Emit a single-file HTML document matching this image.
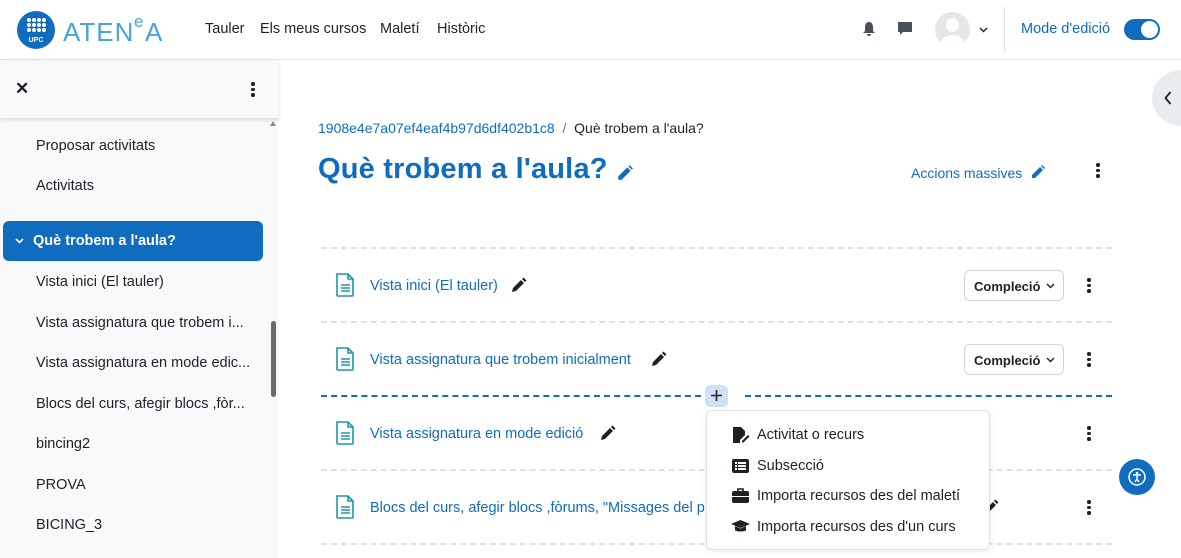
<!DOCTYPE html>
<html><head><meta charset="utf-8"><style>
*{box-sizing:border-box;margin:0;padding:0}
body{width:1181px;height:558px;overflow:hidden;font-family:"Liberation Sans",sans-serif;background:#fff;position:relative;color:#1d2125;font-size:14.5px}
.abs{position:absolute}
.hdr{position:absolute;left:0;top:0;width:1181px;height:60px;border-bottom:1px solid #dee2e6;background:#fff}
.nav{position:absolute;top:21px;font-size:14.5px;color:#1d2125}
.side{position:absolute;left:0;top:60px;width:279px;height:498px;background:#f8f9fa}
.sh{position:absolute;left:0;top:0;width:279px;height:58px;background:#f8f9fa;box-shadow:0 2px 4px rgba(0,0,0,.12)}
.si{position:absolute;left:36px;font-size:14.5px;color:#1d2125;white-space:nowrap}
.dash{position:absolute;left:321px;width:791px;border-top:2px dashed #dee2e6}
.act{position:absolute;left:370px;color:#0f6cbf;font-size:14.5px;white-space:nowrap}
.comp{position:absolute;left:964px;width:100px;height:31px;border:1px solid #ced4da;border-radius:6px;font-weight:bold;font-size:13px;padding:8px 0 0 9px;background:#fff}
.comp svg{position:absolute;right:8px;top:12px}
.kb{position:absolute;width:4px}
.kb i{display:block;width:3.5px;height:3.5px;border-radius:50%;background:#1d2125;margin-bottom:2px}
.dd{position:absolute;left:706px;top:410px;width:284px;height:140px;border:1px solid #dee2e6;border-radius:6px;background:#fff;box-shadow:0 2px 6px rgba(0,0,0,.08)}
.ddi{position:absolute;left:50px;font-size:14.5px;white-space:nowrap}
</style></head><body>
<div class="hdr">
<svg class="abs" style="left:17px;top:11px" width="38" height="38" viewBox="0 0 38 38"><circle cx="19" cy="19" r="19" fill="#0f6cbf"/>
<g fill="#fff"><circle cx="12" cy="9" r="2"/><circle cx="17" cy="9" r="2"/><circle cx="22" cy="9" r="2"/><circle cx="27" cy="9" r="2"/><circle cx="12" cy="14" r="2"/><circle cx="17" cy="14" r="2"/><circle cx="22" cy="14" r="2"/><circle cx="27" cy="14" r="2"/><circle cx="12" cy="19" r="2"/><circle cx="17" cy="19" r="2"/><circle cx="22" cy="19" r="2"/><circle cx="27" cy="19" r="2"/></g>
<text x="19" y="31" font-size="7" font-weight="bold" fill="#fff" text-anchor="middle" font-family="Liberation Sans">UPC</text></svg>
<svg class="abs" style="left:62px;top:10px" width="105" height="36"><text x="1" y="31" font-size="26" fill="#4aa3dc" font-family="Liberation Sans" letter-spacing="1">ATEN</text><text x="72" y="17" font-size="17" fill="#4aa3dc" font-family="Liberation Sans">e</text><text x="83" y="31" font-size="26" fill="#4aa3dc" font-family="Liberation Sans">A</text></svg>
<div class="nav" style="left:205px">Tauler</div>
<div class="nav" style="left:260px">Els meus cursos</div>
<div class="nav" style="left:380px">Maletí</div>
<div class="nav" style="left:437px">Històric</div>
<svg class="abs" style="left:862px;top:21px" width="14" height="16" viewBox="0 0 14 16"><path d="M7 1C4 1 3 4 3 6v4L1 12h12l-2-2V6c0-2-1-5-4-5z M5 13a2 2 0 0 0 4 0z" fill="#495057"/></svg>
<svg class="abs" style="left:897px;top:21px" width="16" height="16" viewBox="0 0 16 16"><path d="M1 1h14v10H6l-3 3v-3H1z" fill="#495057"/></svg>
<div class="abs" style="left:935px;top:12px;width:35px;height:35px;border-radius:50%;background:#e6e6e6;overflow:hidden"><div class="abs" style="left:11px;top:6px;width:13px;height:14px;border-radius:50%;background:#fff"></div><div class="abs" style="left:5px;top:23px;width:25px;height:20px;border-radius:50%;background:#fff"></div></div>
<svg class="abs" style="left:979px;top:27px" width="9" height="6"><path d="M1 1l3.5 3.5L8 1" stroke="#1d2125" stroke-width="1.4" fill="none"/></svg>
<div class="abs" style="left:1004px;top:7px;width:1px;height:45px;background:#dee2e6"></div>
<div class="abs" style="left:1021px;top:21px;color:#0f6cbf;font-size:14.5px">Mode d'edició</div>
<div class="abs" style="left:1124px;top:19px;width:36px;height:21px;border-radius:11px;background:#0f6cbf"><div class="abs" style="left:17px;top:2px;width:17px;height:17px;border-radius:50%;background:#fff"></div></div>
</div>

<div class="side">
<div class="sh">
<div class="abs" style="left:15px;top:19px;font-size:17px;font-weight:bold">✕</div>
<div class="kb" style="left:251px;top:22px"><i></i><i></i><i></i></div>
</div>
<div class="abs" style="left:270px;top:61px;width:0;height:0;border-left:3px solid transparent;border-right:3px solid transparent;border-bottom:5px solid #888"></div>
<div class="si" style="top:78px">Proposar activitats</div>
<div class="si" style="top:118px">Activitats</div>
<div class="abs" style="left:3px;top:161px;width:260px;height:40px;background:#0f6cbf;border-radius:6px;color:#fff;font-weight:bold;padding:12px 0 0 30px;font-size:14.5px">Què trobem a l'aula?<svg class="abs" style="left:12px;top:17px" width="9" height="6"><path d="M1 1l3.5 3.5L8 1" stroke="#fff" stroke-width="1.6" fill="none"/></svg></div>
<div class="si" style="top:214px">Vista inici (El tauler)</div>
<div class="si" style="top:255px">Vista assignatura que trobem i...</div>
<div class="si" style="top:295px">Vista assignatura en mode edic...</div>
<div class="si" style="top:336px">Blocs del curs, afegir blocs ,fòr...</div>
<div class="si" style="top:376px">bincing2</div>
<div class="si" style="top:417px">PROVA</div>
<div class="si" style="top:457px">BICING_3</div>
<div class="abs" style="left:271px;top:261px;width:5px;height:76px;border-radius:3px;background:#6a6a6a"></div>
</div>

<div class="abs" style="left:1152px;top:70px;width:60px;height:56px;border-radius:50%;background:#e9ecef"></div>
<svg class="abs" style="left:1164px;top:91px" width="8" height="14"><path d="M6.5 1L1.5 7l5 6" stroke="#1d2125" stroke-width="1.8" fill="none"/></svg>

<div class="abs" style="left:318px;top:120px;font-size:14px"><span style="color:#0f6cbf">1908e4e7a07ef4eaf4b97d6df402b1c8</span> <span style="color:#6a737b">&nbsp;/&nbsp;</span> Què trobem a l'aula?</div>
<div class="abs" style="left:318px;top:153px;font-size:29px;font-weight:bold;color:#0f6cbf;letter-spacing:0.2px">Què trobem a l'aula?</div>
<svg class="abs" style="left:616px;top:164px" width="18" height="18" viewBox="0 0 16 16"><path d="M2 11l8-8 3 3-8 8H2z M11 2l1-1 3 3-1 1z" fill="#0f6cbf"/></svg>
<div class="abs" style="left:911px;top:165px;color:#0f6cbf;font-size:14px">Accions massives</div>
<svg class="abs" style="left:1030px;top:164px" width="16" height="16" viewBox="0 0 16 16"><path d="M2 11l8-8 3 3-8 8H2z M11 2l1-1 3 3-1 1z" fill="#0f6cbf"/></svg>
<div class="kb" style="left:1096px;top:163px"><i></i><i></i><i></i></div>

<div class="dash" style="top:247px"></div>
<div class="dash" style="top:321px"></div>
<div class="dash" style="top:395px;border-top-color:#0f6cbf;left:745px;width:367px"></div>
<div class="dash" style="top:395px;border-top-color:#0f6cbf;width:380px"></div>
<div class="dash" style="top:469px"></div>
<div class="dash" style="top:543px"></div>

<svg width="0" height="0" style="position:absolute"><defs><symbol id="doc" viewBox="0 0 20 24"><path d="M2 1h11l5 5v16a1 1 0 0 1-1 1H3a1 1 0 0 1-1-1z M13 1v5h5 M6 12h9 M6 15h9 M6 18h9" fill="none" stroke="#1a9ba8" stroke-width="1.6"/></symbol>
<symbol id="pen" viewBox="0 0 16 16"><path d="M1 15l1-4 8-8 3 3-8 8z M11 2l1.5-1.5 3 3L14 5z" fill="#1d2125"/></symbol>
<symbol id="chev" viewBox="0 0 9 6"><path d="M1 1l3.5 3.5L8 1" stroke="#1d2125" stroke-width="1.4" fill="none"/></symbol></defs></svg>

<svg class="abs" style="left:335px;top:273px" width="20" height="24"><use href="#doc"/></svg>
<div class="act" style="top:278px">Vista inici (El tauler)</div>
<svg class="abs" style="left:511px;top:277px" width="16" height="16"><use href="#pen"/></svg>
<div class="comp" style="top:270px">Compleció<svg width="9" height="6"><use href="#chev"/></svg></div>
<div class="kb" style="left:1087px;top:278px"><i></i><i></i><i></i></div>

<svg class="abs" style="left:335px;top:347px" width="20" height="24"><use href="#doc"/></svg>
<div class="act" style="top:352px">Vista assignatura que trobem inicialment</div>
<svg class="abs" style="left:651px;top:351px" width="16" height="16"><use href="#pen"/></svg>
<div class="comp" style="top:344px">Compleció<svg width="9" height="6"><use href="#chev"/></svg></div>
<div class="kb" style="left:1087px;top:352px"><i></i><i></i><i></i></div>

<div class="abs" style="left:705px;top:385px;width:23px;height:22px;border-radius:5px;background:#cfe2f5"></div>
<svg class="abs" style="left:710px;top:389px" width="13" height="13"><path d="M6.5 1v11M1 6.5h11" stroke="#1d2125" stroke-width="1.6"/></svg>

<svg class="abs" style="left:335px;top:421px" width="20" height="24"><use href="#doc"/></svg>
<div class="act" style="top:426px">Vista assignatura en mode edició</div>
<svg class="abs" style="left:600px;top:425px" width="16" height="16"><use href="#pen"/></svg>
<div class="kb" style="left:1087px;top:426px"><i></i><i></i><i></i></div>

<svg class="abs" style="left:335px;top:495px" width="20" height="24"><use href="#doc"/></svg>
<div class="act" style="top:500px">Blocs del curs, afegir blocs ,fòrums, "Missages del p</div>
<svg class="abs" style="left:983px;top:499px" width="16" height="16"><use href="#pen"/></svg>
<div class="kb" style="left:1087px;top:500px"><i></i><i></i><i></i></div>

<div class="dd">
<svg class="abs" style="left:25px;top:15px" width="18" height="18" viewBox="0 0 18 18"><path d="M1 1h8l4 4v4l-5 5v3H1z" fill="#1d2125"/><path d="M10 15l6-6 1.5 1.5-6 6H10z" fill="#1d2125"/></svg>
<div class="ddi" style="top:16px">Activitat o recurs</div>
<svg class="abs" style="left:25px;top:48px" width="17" height="14" viewBox="0 0 17 14"><rect width="17" height="14" rx="2" fill="#1d2125"/><g fill="#fff"><rect x="3" y="3" width="2" height="2"/><rect x="3" y="6" width="2" height="2"/><rect x="3" y="9" width="2" height="2"/><rect x="6" y="3" width="8" height="2"/><rect x="6" y="6" width="8" height="2"/><rect x="6" y="9" width="8" height="2"/></g></svg>
<div class="ddi" style="top:47px">Subsecció</div>
<svg class="abs" style="left:25px;top:77px" width="17" height="15" viewBox="0 0 17 15"><path d="M6 3V1h5v2" fill="none" stroke="#1d2125" stroke-width="1.6"/><rect y="3" width="17" height="12" rx="2" fill="#1d2125"/><rect y="8" width="17" height="1" fill="#fff"/></svg>
<div class="ddi" style="top:77px">Importa recursos des del maletí</div>
<svg class="abs" style="left:24px;top:108px" width="19" height="15" viewBox="0 0 19 15"><path d="M9.5 1L19 5l-9.5 4L0 5z M4 7v4c0 2 11 2 11 0V7l-5.5 2.5z" fill="#1d2125"/></svg>
<div class="ddi" style="top:108px">Importa recursos des d'un curs</div>
</div>

<div class="abs" style="left:1119px;top:459px;width:36px;height:36px;border-radius:50%;background:#0f6cbf"></div>
<svg class="abs" style="left:1128px;top:468px" width="18" height="18" viewBox="0 0 18 18"><circle cx="9" cy="9" r="8" fill="none" stroke="#fff" stroke-width="1.5"/><circle cx="9" cy="5" r="1.3" fill="#fff"/><path d="M5 7h8M9 7v4l-2 3M9 11l2 3" stroke="#fff" stroke-width="1.5" fill="none"/></svg>
</body></html>
